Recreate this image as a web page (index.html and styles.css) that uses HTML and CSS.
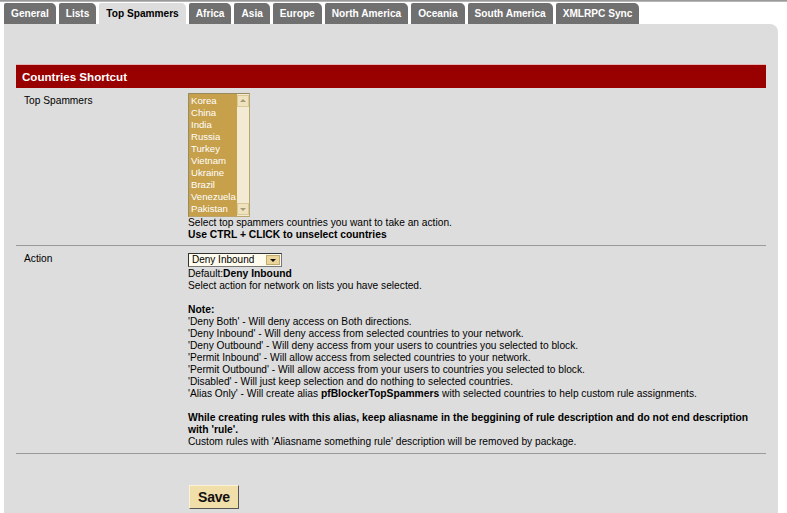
FILE: index.html
```html
<!DOCTYPE html>
<html>
<head>
<meta charset="utf-8">
<link rel="stylesheet" href="styles.css">
</head>
<body>
<div class="topline"></div>
<ul class="tabs">
  <li class="tab">General</li>
  <li class="tab">Lists</li>
  <li class="tab active">Top Spammers</li>
  <li class="tab">Africa</li>
  <li class="tab">Asia</li>
  <li class="tab">Europe</li>
  <li class="tab">North America</li>
  <li class="tab">Oceania</li>
  <li class="tab">South America</li>
  <li class="tab">XMLRPC Sync</li>
</ul>
<div class="panel">
  <div class="head">Countries Shortcut</div>
  <div class="row row-top">
    <div class="label">Top Spammers</div>
    <div class="field">
      <div class="listbox">
        <ul class="items">
          <li>Korea</li>
          <li>China</li>
          <li>India</li>
          <li>Russia</li>
          <li>Turkey</li>
          <li>Vietnam</li>
          <li>Ukraine</li>
          <li>Brazil</li>
          <li>Venezuela</li>
          <li>Pakistan</li>
        </ul>
        <div class="scroll">
          <span class="sbtn up"></span>
          <span class="sbtn down"></span>
        </div>
      </div>
      <p>Select top spammers countries you want to take an action.</p>
      <p><b>Use CTRL + CLICK to unselect countries</b></p>
    </div>
  </div>
  <div class="row row-action">
    <div class="label">Action</div>
    <div class="field">
      <div class="select"><span class="sel-text">Deny Inbound</span><span class="sel-btn"></span></div>
      <p>Default:<b>Deny Inbound</b></p>
      <p>Select action for network on lists you have selected.</p>
      <p>&nbsp;</p>
      <p><b>Note:</b></p>
      <p>'Deny Both' - Will deny access on Both directions.</p>
      <p>'Deny Inbound' - Will deny access from selected countries to your network.</p>
      <p>'Deny Outbound' - Will deny access from your users to countries you selected to block.</p>
      <p>'Permit Inbound' - Will allow access from selected countries to your network.</p>
      <p>'Permit Outbound' - Will allow access from your users to countries you selected to block.</p>
      <p>'Disabled' - Will just keep selection and do nothing to selected countries.</p>
      <p>'Alias Only' - Will create alias <b>pfBlockerTopSpammers</b> with selected countries to help custom rule assignments.</p>
      <p>&nbsp;</p>
      <p><b>While creating rules with this alias, keep aliasname in the beggining of rule description and do not end description<br>with 'rule'.</b></p>
      <p>Custom rules with 'Aliasname something rule' description will be removed by package.</p>
    </div>
  </div>
  <div class="save-row">
    <button class="save">Save</button>
  </div>
</div>
</body>
</html>
```

FILE: styles.css
```css
html, body {
  margin: 0;
  padding: 0;
  background: #ffffff;
  font-family: "Liberation Sans", Arial, sans-serif;
  font-size: 10.2px;
  line-height: 12px;
  color: #000;
}

.topline {
  height: 2px;
  background: linear-gradient(#8c8c8c, #c4c4c4);
}

.tabs {
  list-style: none;
  margin: 1px 0 0 0;
  padding: 0 0 0 4px;
  display: flex;
}

.tab {
  height: 21px;
  line-height: 22px;
  padding: 0 7px;
  margin-right: 3px;
  background: #707070;
  color: #ffffff;
  font-weight: bold;
  font-size: 10.15px;
  border-radius: 2px 5px 0 0;
  white-space: nowrap;
}

.tab.active {
  background: #dddddd;
  color: #000000;
}

.panel {
  margin: 0 9px 0 4px;
  background: #dddddd;
  border-top-right-radius: 8px;
  padding: 41px 12px 0 12px;
  min-height: 448px;
}

.head {
  height: 23px;
  line-height: 23px;
  background: #990000;
  color: #ffffff;
  font-weight: bold;
  font-size: 11.6px;
  padding-left: 6px;
  box-shadow: 0 -1px 0 #e7b4b4;
}

.row {
  display: grid;
  grid-template-columns: 172px 1fr;
  border-bottom: 1px solid #9a9a9a;
}

.row-top {
  padding: 5px 0 4px 0;
}

.row-action {
  padding: 7px 0 5px 0;
}

.label {
  padding-left: 8px;
}

.row-top .label {
  padding-top: 2px;
}

.field p {
  margin: 0;
  white-space: nowrap;
}

.field b {
  font-size: 10.3px;
}

.listbox {
  display: flex;
  width: 62px;
  height: 124px;
  box-sizing: border-box;
  border: 1px solid #b9a46c;
  border-top-color: #9a8a60;
  border-left-color: #9a8a60;
  background: #f2ead3;
}

.items {
  list-style: none;
  margin: 0;
  padding: 1px 0 0 0;
  width: 48px;
  background: #c6a04a;
  color: #ffffff;
}

.items li {
  height: 12px;
  line-height: 12px;
  padding-left: 2px;
  font-size: 9.6px;
  white-space: nowrap;
  overflow: hidden;
}

.scroll {
  flex: 1;
  display: flex;
  flex-direction: column;
  justify-content: space-between;
  align-items: center;
  padding: 1px 0;
  background: #f2ead3;
}

.sbtn {
  position: relative;
  width: 10px;
  height: 10px;
  background: #efe3bf;
  border: 1px solid #d8c996;
}

.sbtn::before {
  content: "";
  position: absolute;
  left: 2px;
  width: 0;
  height: 0;
  border-left: 3px solid transparent;
  border-right: 3px solid transparent;
}

.sbtn.up::before {
  top: 3px;
  border-bottom: 3px solid #a89878;
}

.sbtn.down::before {
  top: 4px;
  border-top: 3px solid #a89878;
}

.select {
  display: flex;
  width: 94px;
  height: 14px;
  margin-bottom: 1px;
  box-sizing: border-box;
  border: 1px solid #333333;
  border-right-color: #777;
  border-bottom-color: #777;
  background: #fffcee;
}

.sel-text {
  flex: 1;
  line-height: 12px;
  padding-left: 3px;
  font-size: 10px;
}

.sel-btn {
  position: relative;
  width: 14px;
  margin: 1px 1px 1px 0;
  background: #ecd59a;
  border: 1px solid #c0aa70;
  box-sizing: border-box;
}

.sel-btn::before {
  content: "";
  position: absolute;
  left: 3px;
  top: 3px;
  border-left: 3px solid transparent;
  border-right: 3px solid transparent;
  border-top: 3px solid #111;
}

.save-row {
  padding: 31px 0 0 173px;
}

.save {
  width: 50px;
  height: 24px;
  padding: 0;
  background: #f1dfaa;
  border: 1px solid;
  border-color: #fbf2d8 #555555 #555555 #fbf2d8;
  font-family: "Liberation Sans", Arial, sans-serif;
  font-weight: bold;
  font-size: 14px;
  color: #111;
  letter-spacing: -0.2px;
}
```
